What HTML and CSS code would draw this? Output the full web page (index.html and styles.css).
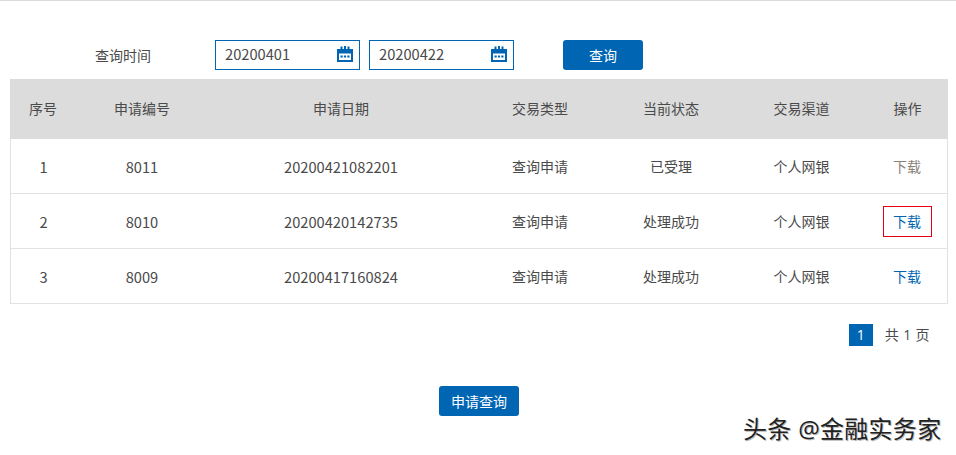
FILE: index.html
```html
<!DOCTYPE html>
<html lang="zh-CN">
<head>
<meta charset="utf-8">
<title>查询</title>
<link rel="stylesheet" href="styles.css">
</head>
<body>
<svg class="sprite" width="0" height="0" aria-hidden="true">
  <symbol id="cal" viewBox="0 0 16 16">
    <path fill="#0065b3" fill-rule="evenodd" d="M0 3h3.500V.5h2V3h1.500V0h2v3h1.500V.5h2V3H16v13H0zM2 7.500V14h12V7.500z"/>
    <path fill="#0065b3" d="M3.500 9.500h2.200v2H3.500zM6.900 9.500h2.200v2H6.900zM10.300 9.500h2.200v2h-2.200z"/>
  </symbol>
</svg>
<main class="page">
  <form class="filter">
    <span class="filter-label">查询时间</span>
    <div class="date-field"><span class="num">20200401</span><svg class="cal-icon"><use href="#cal"/></svg></div>
    <div class="date-field"><span class="num">20200422</span><svg class="cal-icon"><use href="#cal"/></svg></div>
    <button type="button" class="btn btn-search">查询</button>
  </form>
  <table class="result">
    <colgroup>
      <col class="c1"><col class="c2"><col class="c3"><col class="c4"><col class="c5"><col class="c6"><col class="c7">
    </colgroup>
    <thead>
      <tr><th>序号</th><th>申请编号</th><th>申请日期</th><th>交易类型</th><th>当前状态</th><th>交易渠道</th><th>操作</th></tr>
    </thead>
    <tbody>
      <tr><td class="num">1</td><td class="num">8011</td><td class="num">20200421082201</td><td>查询申请</td><td>已受理</td><td>个人网银</td><td><a class="dl dl-done">下载</a></td></tr>
      <tr><td class="num">2</td><td class="num">8010</td><td class="num">20200420142735</td><td>查询申请</td><td>处理成功</td><td>个人网银</td><td><a class="dl dl-focus">下载</a></td></tr>
      <tr><td class="num">3</td><td class="num">8009</td><td class="num">20200417160824</td><td>查询申请</td><td>处理成功</td><td>个人网银</td><td><a class="dl">下载</a></td></tr>
    </tbody>
  </table>
  <div class="pager"><span class="pager-num">1</span><span class="pager-total">共 1 页</span></div>
  <div class="apply"><button type="button" class="btn">申请查询</button></div>
</main>
<div class="watermark">头条 @金融实务家</div>
</body>
</html>
```
FILE: styles.css
```css
* { box-sizing: border-box; }
html, body { margin: 0; height: 100%; overflow: hidden; }
body {
  position: relative;
  background: #fff;
  color: #4a4a4a;
  font: 14px/20px "Open Sans", "Noto Sans CJK SC", sans-serif;
  border-top: 1px solid #dcdcdc;
}
.sprite { position: absolute; }
.num { font-family: "Noto Sans CJK SC", sans-serif; font-size: 14.67px; }
.page { padding: 39px 8px 0 10px; }
.filter { display: flex; align-items: center; height: 30px; margin-bottom: 9px; }
.filter-label { width: 205px; padding-left: 85px; padding-top: 2px; }
.date-field {
  display: flex; align-items: center; justify-content: space-between;
  width: 145px; height: 30px; margin-right: 9px; padding: 0 6px 2px 9px;
  border: 1px solid #0065b3;
}
.cal-icon { width: 16px; height: 16px; }
.btn {
  width: 80px; height: 30px; padding: 2px 0 0; border: 0; border-radius: 3px;
  background: #0065b3; color: #fff; font: inherit;
}
.btn-search { margin-left: 40px; }
.result { width: 938px; table-layout: fixed; border-collapse: separate; border-spacing: 0; }
.c1 { width: 66px; } .c2 { width: 132px; } .c3 { width: 266px; } .c4 { width: 132px; }
.c5 { width: 130px; } .c6 { width: 131px; } .c7 { width: 81px; }
.result th { height: 60px; padding: 0; background: #dcdcdc; font-weight: 400; }
.result td { height: 55px; padding: 1px 0 0; text-align: center; border-bottom: 1px solid #e2e2e2; }
.result tbody tr td:first-child { border-left: 1px solid #e2e2e2; }
.result tbody tr td:last-child { border-right: 1px solid #e2e2e2; }
.dl { display: inline-block; width: 49px; height: 31px; line-height: 29px; color: #0065b3; border: 1px solid transparent; }
.dl-done { color: #8a8178; }
.dl-focus { border-color: #e60012; }
.pager { display: flex; justify-content: flex-end; align-items: center; height: 22px; margin-top: 20px; padding-right: 18px; }
.pager-num { width: 24px; height: 22px; line-height: 22px; margin-right: 12px; text-align: center; background: #0065b3; color: #fff; }
.pager-total { letter-spacing: .4px; }
.apply { display: flex; justify-content: center; margin-top: 40px; }
.watermark {
  position: absolute; left: 743px; top: 413px;
  color: #222; font-size: 24px; line-height: 30px; letter-spacing: .3px; white-space: nowrap;
  text-shadow: 1px 1px 0 #bbb;
}
```
